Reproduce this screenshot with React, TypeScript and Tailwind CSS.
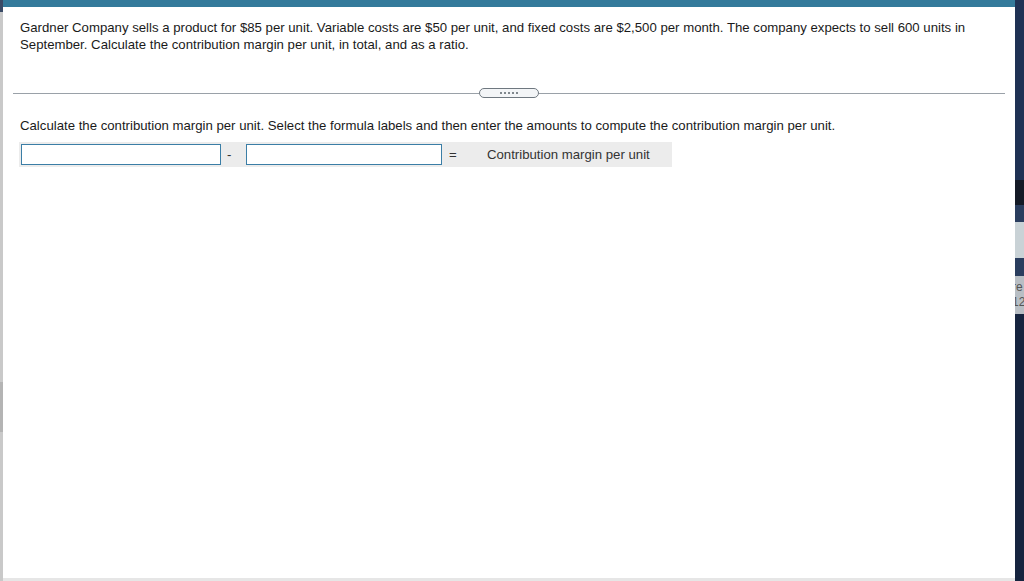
import React from 'react';

export default function App() {
  return (
    <div className="w-[1024px] h-[581px] flex bg-[#1b2a45] overflow-hidden" style={{ fontFamily: '"Liberation Sans", Arial, sans-serif' }}>
      {/* left strip */}
      <div className="w-[3px] flex flex-col shrink-0">
        <div className="h-[12px] bg-[#3a4a66]" />
        <div className="h-[370px] bg-[#c9c9c9]" />
        <div className="h-[50px] bg-[#b4b4b4]" />
        <div className="flex-1 bg-[#c9c9c9]" />
      </div>

      {/* main panel */}
      <div className="w-[1012px] flex flex-col bg-white shrink-0">
        <div className="h-[7px] bg-[#347a9b]" />
        <div className="flex-1 flex flex-col">
          <p className="pl-[17px] pr-[20px] pt-[12px] text-[13.2px] leading-[17px] text-[#1a1a1a]">
            Gardner Company sells a product for $85 per unit. Variable costs are $50 per unit, and fixed costs are $2,500 per month. The company expects to sell 600 units in September. Calculate the contribution margin per unit, in total, and as a ratio.
          </p>

          {/* divider */}
          <div className="mt-[35px] ml-[10px] mr-[10px] flex items-center h-[10px]">
            <div className="flex-1 h-px bg-[#9aa1a8]" />
            <div className="w-[60px] h-[10px] rounded-full border border-[#6f7880] bg-[#f3f5f7] flex items-center justify-center gap-[2px]">
              {[0, 1, 2, 3, 4].map(i => (
                <span key={i} className="w-[2px] h-[2px] rounded-full bg-[#5a636b]" />
              ))}
            </div>
            <div className="flex-1 h-px bg-[#9aa1a8]" />
          </div>

          <p className="mt-[19px] pl-[17px] text-[13.2px] leading-[17px] text-[#1a1a1a]">
            Calculate the contribution margin per unit. Select the formula labels and then enter the amounts to compute the contribution margin per unit.
          </p>

          <div className="mt-[8px] ml-[16px] w-[653px] h-[25px] bg-[#ececec] flex items-center text-[13.2px] text-[#333]">
            <div className="ml-[2px] w-[200px] h-[21px] bg-white border border-[#3b7ea6]" />
            <span className="ml-[6px] w-[19px]">-</span>
            <div className="w-[196px] h-[21px] bg-white border border-[#3b7ea6]" />
            <span className="ml-[7px] w-[38px]">=</span>
            <span className="text-[#333]">Contribution margin per unit</span>
          </div>
        </div>
        <div className="h-[3px] bg-[#e6e6e6]" />
      </div>

      {/* right desktop strip */}
      <div className="flex-1 flex flex-col">
        <div className="h-[180px] bg-[#1f3154]" />
        <div className="h-[25px] bg-[#141a26]" />
        <div className="h-[17px] bg-[#2a3d5e]" />
        <div className="h-[36px] bg-[#c9d2d6]" />
        <div className="h-[18px] bg-[#2a3d5e]" />
        <div className="h-[38px] bg-[#b8bec4] text-[#555] text-[12px] leading-[15px] pt-[4px] overflow-hidden">
          <div className="-ml-[3px]">re</div>
          <div className="-ml-[3px]">12</div>
        </div>
        <div className="flex-1 bg-[#16243f]" />
      </div>
    </div>
  );
}
